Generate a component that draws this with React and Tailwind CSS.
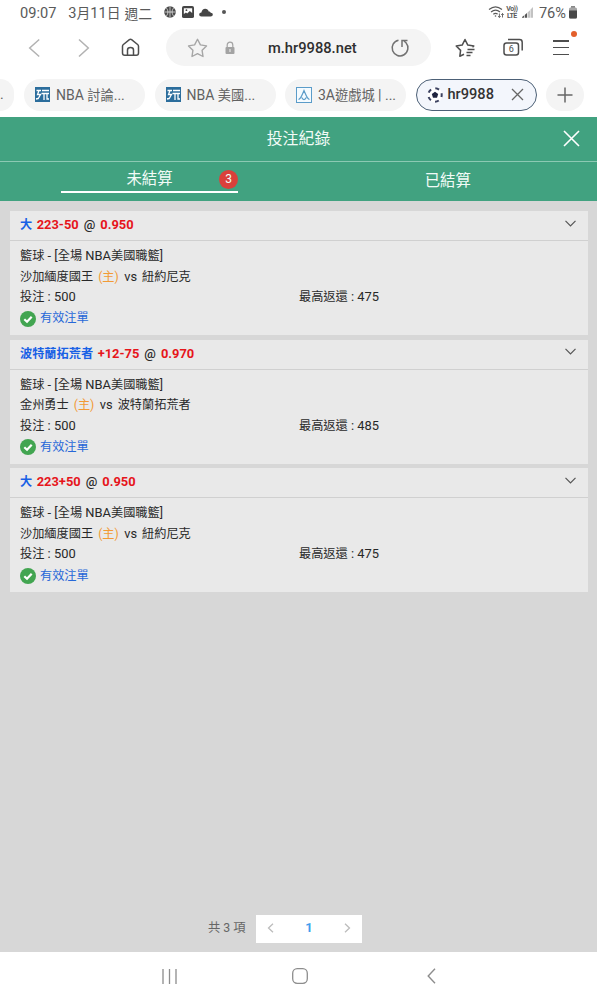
import React from "react";

const bets = [
  {
    id: 1,
    pick: "大",
    line: "223-50",
    odds: "0.950",
    home: "沙加緬度國王",
    away: "紐約尼克",
    stake: 500,
    payout: 475,
  },
  {
    id: 2,
    pick: "波特蘭拓荒者",
    line: "+12-75",
    odds: "0.970",
    home: "金州勇士",
    away: "波特蘭拓荒者",
    stake: 500,
    payout: 485,
  },
  {
    id: 3,
    pick: "大",
    line: "223+50",
    odds: "0.950",
    home: "沙加緬度國王",
    away: "紐約尼克",
    stake: 500,
    payout: 475,
  },
];

const StatusBar = () => (
  <div className="flex h-[29px] items-center pr-[19px] pb-px pl-5 text-[14.6px] text-[#5a5a5a]">
    <span>09:07</span>
    <span className="ml-3 whitespace-pre">
      3<span className="text-[13.8px]">月</span>11
      <span className="text-[13.8px]">日</span>
    </span>
    <span className="ml-1 text-[13.8px]">週二</span>
    <svg className="ml-[12px] mt-[-4px]" width="12" height="12" viewBox="0 0 13 13" fill="none">
      <circle cx="6.5" cy="6.5" r="6.3" fill="#4a4a4a" />
      <path d="M6.5 .5v12M.5 6.5h12M2.3 2c2.6 2.5 2.6 6.5 0 9M10.7 2c-2.6 2.5-2.6 6.500 0 9" stroke="#fff" strokeWidth=".7" />
    </svg>
    <svg className="ml-[6px] mt-[-4px]" width="12" height="12" viewBox="0 0 13 13">
      <rect width="13" height="13" rx="2" fill="#454545" />
      <path d="M2 2.500h9v5L8.500 5.500 5.600 8.200 4.300 7 2 8.700z" fill="#fff" />
      <circle cx="4.800" cy="4.500" r="1" fill="#454545" />
    </svg>
    <svg className="ml-[5px] mt-[-4px]" width="14" height="9" viewBox="0 0 14 9" fill="#454545">
      <path d="M2.500 8.500C1 8.500.2 7.600.2 6.500S1.200 4.600 2.400 4.500C2.800 2.200 4.200.7 6.200.7c1.800 0 3 1 3.500 2.700 1 0 1.700.5 2 1.400 1.300.1 2.100.8 2.100 1.800 0 1.200-.9 1.900-2.200 1.900z" />
    </svg>
    <span className="ml-[9px] mt-[-4px] h-1 w-1 rounded-full bg-[#555]" />

    <div className="ml-auto flex items-center">
      <svg className="mt-[-3px]" width="17" height="14" viewBox="0 0 17 14" fill="none" stroke="#5a5a5a" strokeWidth="1.100">
        <path d="M1 4.500c4-3.300 9-3.300 13 0M3 7c3-2.400 6.300-2.400 9 0M5.300 9.200c1.600-1.200 3-1.200 4.400 0" />
        <circle cx="7.500" cy="11" r=".8" fill="#5a5a5a" stroke="none" />
        <path d="M11.400 8.500v4M10.200 11l1.200 1.500 1.200-1.500M14.500 12.500v-4M13.300 10l1.200-1.500 1.200 1.500" strokeWidth=".9" />
      </svg>
      <span className="ml-px mt-[-2px] flex w-[12px] flex-col items-center text-[7px] leading-[6.500px] font-bold tracking-[-0.500px]">
        <span>Vo))</span>
        <span>LTE</span>
      </span>
      <svg className="ml-[4px] mt-[-3px]" width="12" height="13" viewBox="0 0 12 13">
        <path d="M0 11.800h2V9.500L0 11zM2.700 11.800h2.300V7L2.700 9z" fill="#555" />
        <path d="M5.500 11.800H8V4.200L5.500 6.600zM8.500 11.800H11V1L8.500 3.600z" fill="#c2c2c2" />
      </svg>
      <span className="ml-[5px]">76%</span>
      <svg className="ml-[2px] mt-[-3px]" width="10" height="13" viewBox="0 0 10 13">
        <path d="M3 0h4v2H3z" fill="#888" />
        <rect x="1" y="1.500" width="8" height="11" rx="1.500" fill="#a5a5a5" />
        <path d="M1 4.500h8V11q0 1.500-1.500 1.500h-5Q1 12.500 1 11z" fill="#484848" />
      </svg>
    </div>
  </div>
);

const Toolbar = () => (
  <div className="flex h-[37px] items-center text-[#4e4e4e]">
    <svg className="ml-7" width="13" height="20" viewBox="0 0 13 20" fill="none" stroke="#b2b2b2" strokeWidth="1.500">
      <path d="M11.200 1.500L1.700 10l9.500 8.500" />
    </svg>
    <svg className="ml-[36px]" width="13" height="20" viewBox="0 0 13 20" fill="none" stroke="#b2b2b2" strokeWidth="1.500">
      <path d="M2 1.500L11.300 10 2 18.500" />
    </svg>
    <svg className="ml-[31px]" width="19" height="19" viewBox="0 0 19 19" fill="none" stroke="currentColor" strokeWidth="1.500" strokeLinejoin="round">
      <path d="M1.500 8.200c0-.7.3-1.200.9-1.700l6-4.800c.700-.500 1.500-.500 2.200 0l6 4.800c.6.500.9 1 .9 1.700V15c0 1.500-.7 2.300-2.200 2.300H3.700c-1.500 0-2.200-.8-2.200-2.300z" />
      <path d="M6.500 17v-5c0-1.500 1.100-2.500 3-2.500s3 1 3 2.500v5" />
    </svg>
    <div className="ml-[26px] flex h-[37px] w-[265px] items-center rounded-full bg-[#f4f4f4]">
      <svg className="ml-[21px]" width="21" height="20" viewBox="0 0 21 20" fill="none" stroke="#a6a6a6" strokeWidth="1.400" strokeLinejoin="round">
        <path d="M10.500 1.300l2.900 5.600 6.100 1-4.400 4.400.9 6.200-5.500-2.800L5 18.500l.9-6.200L1.500 7.900l6.100-1z" />
      </svg>
      <svg className="ml-4" width="12" height="14" viewBox="0 0 12 14" fill="none">
        <path d="M3.200 7V4a2.800 2.800 0 0 1 5.600 0v3" stroke="#a3a3a3" strokeWidth="1.200" />
        <rect x="1.500" y="6" width="9" height="7" rx="1" fill="#a3a3a3" />
        <path d="M6 8v3" stroke="#f4f4f4" />
      </svg>
      <span className="ml-[32px] w-[90px] pt-px text-[14.700px] font-medium text-[#2f2f2f]">m.hr9988.net</span>
      <svg className="ml-[32px]" width="20" height="20" viewBox="0 0 20 20" fill="none" stroke="#717171" strokeWidth="1.500">
        <path d="M8.500 2.200A7.900 7.900 0 1 0 16 4.800L14 3" />
        <path d="M12 9V2.500h5.500" />
      </svg>
    </div>
    <svg className="ml-[24px]" width="21" height="20" viewBox="0 0 21 20" fill="none" stroke="currentColor" strokeWidth="1.500" strokeLinejoin="round">
      <path d="M9 16.300l-4.200 2 .8-5.900L1.200 8l6-.9L10 1.500l2.800 5.600 6 .9-1.300 1.300" />
      <path d="M12.500 11.500h7M11.500 14.500h6M11.500 17.500h4" />
    </svg>
    <svg className="ml-[27px]" width="21" height="19" viewBox="0 0 21 19" fill="none" stroke="currentColor" strokeWidth="1.500">
      <rect x="1" y="5" width="14.500" height="12" rx="2.500" />
      <path d="M5 1.500h11.500c1.800 0 2.700.9 2.700 2.700v8.300" />
      <text x="8.300" y="14.200" fontSize="9" textAnchor="middle" fill="currentColor" stroke="none">6</text>
    </svg>
    <div className="relative ml-[29px] flex h-[15px] w-4 flex-col justify-between">
      <span className="h-[1.500px] bg-[#4e4e4e]" />
      <span className="h-[1.500px] bg-[#4e4e4e]" />
      <span className="h-[1.500px] bg-[#4e4e4e]" />
      <span className="absolute -top-[9px] -right-[8px] h-[6px] w-[6px] rounded-full bg-[#e35f2b]" />
    </div>
  </div>
);

// Favicon of the forum pages
const ForumIcon = () => (
  <svg width="15" height="15" viewBox="0 0 15 15" fill="none">
    <rect width="15" height="15" fill="#2b6d9c" />
    <path d="M1.500 3.500H6M4 3.500L2.500 7.500H5.500L3 12M1 12l2-.5M7 3.500h7M6.500 6.500H14M9 6.500v6.500M12 6.500v5.500h2" stroke="#fff" strokeWidth="1.300" />
  </svg>
);

const GameIcon = () => (
  <svg width="16" height="16" viewBox="0 0 16 16" fill="none" stroke="#5b9cc9">
    <rect x=".5" y=".5" width="15" height="15" fill="#f5fbff" />
    <path d="M2.500 12.500C5 12 6 8 8 3.500c2 4.500 3 8.500 5.500 9M5.700 10.500c1.300 2.700 3.300 2.700 4.600 0" strokeWidth="1.200" />
  </svg>
);

const BallIcon = () => (
  <svg width="16" height="16" viewBox="0 0 16 16" fill="none">
    <circle cx="8" cy="8" r="7.500" fill="#fff" />
    <circle cx="8" cy="8" r="6.700" stroke="#3b4160" strokeWidth="2" strokeDasharray="4 4.420" strokeDashoffset="2" />
    <path d="M8 4.700l3.200 2.300-1.200 3.800H6L4.800 7z" fill="#20243f" />
  </svg>
);

const BrowserTab = ({ icon, children }) => (
  <div className="flex h-8 w-[121px] shrink-0 items-center gap-[6px] rounded-full bg-[#f4f4f4] pl-[11px] text-[14px] whitespace-nowrap text-[#616161]">
    {icon}
    <span className="pt-px">{children}</span>
  </div>
);

const BrowserTabs = () => (
  <div className="mt-[12px] flex h-[33px] items-center">
    <div className="h-8 w-[14px] shrink-0 rounded-r-full bg-[#f4f4f4] pt-[5px] text-[14px] text-[#616161]">.</div>
    <div className="ml-[10px] flex gap-[9.500px]">
      <BrowserTab icon={<ForumIcon />}>
        NBA <span className="text-[13.200px]">討論</span>...
      </BrowserTab>
      <BrowserTab icon={<ForumIcon />}>
        NBA <span className="text-[13.200px]">美國</span>...
      </BrowserTab>
      <BrowserTab icon={<GameIcon />}>
        3A<span className="text-[13.200px]">遊戲城</span> | ...
      </BrowserTab>
      <div className="flex h-8 w-[121px] shrink-0 items-center rounded-full border-[1.500px] border-[#4c6076] bg-[#f3f6fc] pl-[10px] text-[14.600px] font-medium text-[#333]">
        <BallIcon />
        <span className="ml-[5px] pt-px">hr9988</span>
        <svg className="ml-[17px]" width="13" height="13" viewBox="0 0 13 13" stroke="#666" strokeWidth="1.300">
          <path d="M1 1l11 11M12 1L1 12" />
        </svg>
      </div>
    </div>
    <div className="ml-[9px] flex h-8 w-[38px] shrink-0 items-center justify-center rounded-full bg-[#f4f4f4]">
      <svg width="16" height="16" viewBox="0 0 16 16" stroke="#666" strokeWidth="1.500">
        <path d="M8 .5v15M.5 8h15" />
      </svg>
    </div>
  </div>
);

const RecordHeader = () => (
  <div className="mt-[6px] h-[84px] bg-[#41a280] text-[#f2fbf7]">
    <div className="grid h-[45px] grid-cols-[1fr_auto_1fr] items-center border-b border-[#8cc9b3]">
      <h1 className="col-start-2 text-[15.900px] leading-5">投注紀錄</h1>
      <svg className="mt-[-2px] mr-[17px] justify-self-end" width="17" height="17" viewBox="0 0 17 17" stroke="#fff" strokeWidth="1.600">
        <path d="M1 1l15 15M16 1L1 16" />
      </svg>
    </div>
    <div className="grid h-[39px] grid-cols-2 text-[15.400px]">
      <div className="relative ml-[61px] h-[31px] w-[177px] border-b-2 border-white pt-[6px] text-center leading-[22px]">
        未結算
        <span className="absolute top-[7.500px] right-0 h-[19px] w-[19px] rounded-full bg-[#da403b] text-[12px] leading-[19px]">3</span>
      </div>
      <div className="pt-[8px] text-center leading-[22px]">已結算</div>
    </div>
  </div>
);

const BetCard = ({ bet }) => (
  <div className="h-[124px] bg-[#e9e9e9] text-[12.200px] text-[#282828]">
    <div className="flex h-[30px] items-center border-b border-[#d0d0d0] pr-3 pb-[2px] pl-[10px] font-bold">
      <span className="pt-px text-[#1860e5]">{bet.pick}</span>
      <span className="ml-[4.500px] text-[12.900px] text-[#e6151b]">{bet.line}</span>
      <span className="ml-[5px] text-[12.900px] font-medium">@</span>
      <span className="ml-[5px] text-[12.900px] text-[#e6151b]">{bet.odds}</span>
      <svg className="mt-[-3px] ml-auto" width="11" height="7" viewBox="0 0 11 7" fill="none" stroke="#555" strokeWidth="1.200">
        <path d="M.5 .8l5 5 5-5" />
      </svg>
    </div>
    <div className="flex flex-col pt-[5px] pl-[10px] leading-[20.500px]">
      <div className="h-[20.500px] whitespace-pre">
        籃球<span className="text-[12.900px]"> - [</span>全場<span className="text-[12.900px]"> NBA</span>美國職籃]
      </div>
      <div className="flex h-[20.500px]">
        <span>{bet.home}</span>
        <span className="ml-[5px] text-[#f29a35]">(主)</span>
        <span className="ml-[5.500px] text-[12.800px]">vs</span>
        <span className="ml-[5px]">{bet.away}</span>
      </div>
      <div className="flex h-[20.500px]">
        <div className="w-[279px] whitespace-pre">
          投注<span className="text-[12.900px]"> : {bet.stake}</span>
        </div>
        <div className="whitespace-pre">
          最高返還<span className="text-[12.900px]"> : {bet.payout}</span>
        </div>
      </div>
      <div className="flex h-[22px] items-center text-[#2768d8]">
        <svg className="mr-1" width="16" height="16" viewBox="0 0 16 16" fill="none">
          <circle cx="8" cy="8" r="8" fill="#42a551" />
          <path d="M4.300 8.200l2.700 2.500 4.700-5" stroke="#fff" strokeWidth="2.200" />
        </svg>
        <span>有效注單</span>
      </div>
    </div>
  </div>
);

const Pagination = () => (
  <div className="mt-auto mb-[9px] ml-[208px] flex items-center text-[12.300px] text-[#666]">
    <span className="w-12 pb-[2px] whitespace-pre">共 3 項</span>
    <div className="flex h-7 w-[106px] items-center justify-between bg-white px-[11px]">
      <svg className="mt-[-2px]" width="7" height="10" viewBox="0 0 7 10" fill="none" stroke="#bcbcbc" strokeWidth="1.300">
        <path d="M6 .7L1.500 5 6 9.300" />
      </svg>
      <span className="pb-[2px] text-[13px] font-bold text-[#409eed]">1</span>
      <svg className="mt-[-2px]" width="7" height="10" viewBox="0 0 7 10" fill="none" stroke="#bcbcbc" strokeWidth="1.300">
        <path d="M1 .7L5.500 5 1 9.300" />
      </svg>
    </div>
  </div>
);

const NavBar = () => (
  <div className="flex h-12 items-center text-[#8d8d8d]">
    <svg className="ml-[162px]" width="15" height="15" viewBox="0 0 15 15" stroke="currentColor" strokeWidth="1.300">
      <path d="M1 0v15M7.500 0v15M14 0v15" />
    </svg>
    <svg className="ml-[115px]" width="16" height="16" viewBox="0 0 16 16" fill="none" stroke="currentColor" strokeWidth="1.300">
      <rect x=".7" y=".7" width="14.600" height="14.600" rx="4.500" />
    </svg>
    <svg className="ml-[119px]" width="9" height="16" viewBox="0 0 9 16" fill="none" stroke="currentColor" strokeWidth="1.400">
      <path d="M8 .8L1.200 8 8 15.200" />
    </svg>
  </div>
);

const App = () => {
  return (
    <div className="flex h-[1000px] w-[597px] flex-col overflow-hidden bg-white font-[Roboto,'Noto_Sans_CJK_TC',sans-serif]">
      <StatusBar />
      <Toolbar />
      <BrowserTabs />
      <RecordHeader />
      <div className="flex flex-1 flex-col bg-[#d7d7d7]">
        <div className="mr-[9px] ml-[10px] flex flex-col gap-[4.700px] pt-[10px]">
          {bets.map((bet) => (
            <BetCard key={bet.id} bet={bet} />
          ))}
        </div>
        <Pagination />
      </div>
      <NavBar />
    </div>
  );
};

export default App;
